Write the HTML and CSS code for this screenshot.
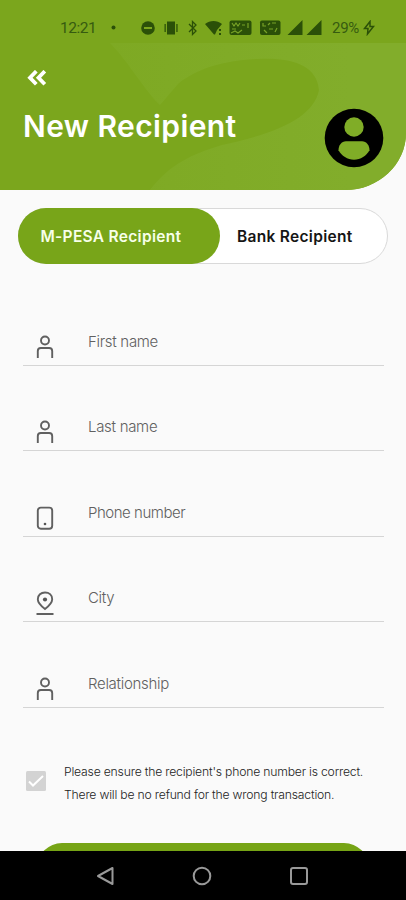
FILE: index.html
```html
<!DOCTYPE html>
<html lang="en">
<head>
<meta charset="utf-8">
<title>New Recipient</title>
<link rel="stylesheet" href="styles.css">
</head>
<body>
<div class="screen">
  <header class="header">
    <svg class="watermark" width="406" height="190" viewBox="0 0 406 190" aria-hidden="true">
      <defs><linearGradient id="leaf" x1="110" x2="350" y1="0" y2="0" gradientUnits="userSpaceOnUse"><stop offset="0" stop-color="#7ea923"/><stop offset="1" stop-color="#82ad2b"/></linearGradient></defs>
      <path fill="url(#leaf)" d="M110 43H406V190H150C170 164 192 154 222 145C278 133 314 117 319 90C317 65 292 57 257 59C213 61 190 74 178 84L160 105C145 91 130 64 110 43Z"/>
    </svg>
    <div class="status">
      <span class="clock">12:21</span>
      <svg class="status-icons" width="220" height="20" viewBox="110 18 220 20" fill="#2b5008">
        <circle cx="113.500" cy="27.500" r="2"/>
        <circle cx="148" cy="28" r="6.800"/><path d="M144 27h8v2h-8z" fill="#7ba61d"/>
        <path d="M167 21.500h8v13h-8zM164.500 24h1.300v8h-1.300zM176.300 24h1.300v8h-1.300z"/>
        <path d="M189 24l7 7-3.500 3.500v-13L196 25l-7 7" fill="none" stroke="#2b5008" stroke-width="1.300"/>
        <path d="M205 24c5-4 12-4 17 0l-5 6-2 4.500h-1zM219 29h2v2h-2zM219 33h2v2h-2z"/>
        <rect x="229.500" y="20.500" width="22" height="14.500" rx="2"/>
        <path d="M232 23l2 3 2-3 2 3 2-3M242 25h3M248 23v5M232 29h4M231 33l4-2 3 2 4-3" fill="none" stroke="#77a126" stroke-width="1.200"/>
        <rect x="260" y="20.500" width="20.500" height="14.500" rx="2"/>
        <path d="M263 23v3h3M268 25l2-2M272 23h4M264 30l3 3M269 29h4M277 28l-2 4" fill="none" stroke="#77a126" stroke-width="1.200"/>
        <path d="M302.500 20v15h-15zM321.500 20v15h-15z"/>
      </svg>
      <span class="battery">29%</span>
      <svg class="bolt" width="12" height="16" viewBox="0 0 12 16"><path d="M7 1.500L1.500 8.500H5L4.500 14L10.500 6.500H7z" fill="none" stroke="#2b5008" stroke-width="1.500"/></svg>
    </div>
    <svg class="back" width="20" height="16" viewBox="0 0 20 16"><path d="M9.300 1.200L3 7.700l6.300 6.500M17.800 1.200l-6.300 6.500 6.300 6.500" fill="none" stroke="#fff" stroke-width="3.800"/></svg>
    <div class="heading">
      <h1>New Recipient</h1>
      <svg class="avatar" width="60" height="60" viewBox="0 0 60 60"><circle cx="30" cy="30" r="29.300"/><circle cx="30" cy="19" r="9.700" fill="#80ad27"/><path fill="#80ad27" d="M22 33.300h16c4.500 0 7.500 4 7.500 9c-3 5.500-9 9.500-15.500 9.500s-12.500-4-15.500-9.500c0-5 3-9 7.500-9z"/></svg>
    </div>
  </header>
  <main>
    <div class="tabs">
      <div class="tab active"><span>M-PESA Recipient</span></div>
      <div class="tab"><span>Bank Recipient</span></div>
    </div>
    <form class="form">
      <div class="field"><svg class="icon" viewBox="0 0 18 25"><circle cx="9" cy="5.500" r="4"/><path d="M1.800 23v-7q0-3 3-3h8.400q3 0 3 3v7"/></svg><span>First name</span></div>
      <div class="field"><svg class="icon" viewBox="0 0 18 25"><circle cx="9" cy="5.500" r="4"/><path d="M1.800 23v-7q0-3 3-3h8.400q3 0 3 3v7"/></svg><span>Last name</span></div>
      <div class="field"><svg class="icon" viewBox="0 0 18 25"><rect x="1.800" y="1.600" width="14.400" height="21.200" rx="3"/><circle class="dot" cx="9" cy="18" r="1.300"/></svg><span class="phone">Phone number</span></div>
      <div class="field"><svg class="icon" viewBox="0 0 18 25"><path d="M9 18C5 15 1.800 12 1.800 8.300C1.800 4 5 1.500 9 1.500s7.200 2.500 7.200 6.800C16.200 12 13 15 9 18zM.5 23h17"/><circle class="dot" cx="9" cy="8.500" r="2.100"/></svg><span>City</span></div>
      <div class="field"><svg class="icon" viewBox="0 0 18 25"><circle cx="9" cy="5.500" r="4"/><path d="M1.800 23v-7q0-3 3-3h8.400q3 0 3 3v7"/></svg><span>Relationship</span></div>
    </form>
    <div class="notice">
      <svg class="check" width="20" height="20" viewBox="0 0 20 20"><rect width="20" height="20" rx="1.500" fill="#d3d3d3"/><path d="M3 10.500l4 4L17 5" fill="none" stroke="#fff" stroke-width="2"/></svg>
      <p>Please ensure the recipient's phone number is correct.<br>There will be no refund for the wrong transaction.</p>
    </div>
    <div class="submit"></div>
  </main>
  <nav class="nav">
    <svg viewBox="0 0 20 20"><path d="M16.500 2v16L2 10z"/></svg>
    <svg viewBox="0 0 20 20"><circle cx="10" cy="10" r="8.300"/></svg>
    <svg viewBox="0 0 20 20"><rect x="2" y="2" width="16" height="16" rx="2"/></svg>
  </nav>
</div>
</body>
</html>
```
FILE: styles.css
```css
* { box-sizing: border-box; }
body { margin: 0; font-family: Inter, sans-serif; background: #fafafa; }
.screen { width: 406px; height: 900px; display: flex; flex-direction: column; overflow: hidden; background: #fafafa; }
.header { height: 189.500px; flex: none; position: relative; overflow: hidden; background: #7ba61d; border-bottom-right-radius: 61px 57px; display: flex; flex-direction: column; }
.watermark { position: absolute; top: 0; left: 0; }
.status { position: relative; height: 38px; padding: 18px 0 0 60px; display: flex; align-items: center; color: #365b10; font: 15.500px/20px Roboto, sans-serif; }
.clock { width: 50px; letter-spacing: -.45px; }
.status-icons { flex: none; }
.battery { margin-left: 2px; width: 31px; font-size: 15px; letter-spacing: -.3px; }
.bolt { flex: none; }
.back { position: relative; margin: 32px 0 0 27px; flex: none; }
.heading { position: relative; display: flex; justify-content: space-between; padding: 22px 22px 0 23px; }
h1 { margin: 0; padding-top: 1px; color: #fff; font-size: 30px; line-height: 34px; font-weight: 600; letter-spacing: .4px; white-space: nowrap; }
.avatar { flex: none; }
main { height: 661.500px; flex: none; overflow: hidden; }
.tabs { margin: 18.500px 18px 0; height: 56px; display: flex; border: 1px solid #d9d9d9; border-radius: 28px; background: #fff; }
.tab { display: flex; align-items: center; height: 56px; margin-top: -1px; padding: 1px 0 0 17px; font-size: 15.500px; font-weight: 600; color: #151515; white-space: nowrap; letter-spacing: .3px; }
.tab.active { width: 202px; margin-left: -1px; padding-left: 22.500px; background: #78a519; color: #f7ffe9; border-radius: 28px; }
.form { padding: 16px 22px 0 23px; }
.field { height: 85.500px; border-bottom: 1px solid #d5d5d5; display: flex; align-items: flex-end; font-size: 15px; font-weight: 300; line-height: 20px; letter-spacing: -.3px; color: #606060; }
.icon { width: 18px; height: 25px; margin: 0 34px 5px 13px; fill: none; stroke: #606060; stroke-width: 1.900; }
.icon .dot { fill: #555; stroke: none; }
.field span { padding-bottom: 13px; }
.field .phone { letter-spacing: -.47px; }
.notice { display: flex; height: 44px; margin: 54px 0 0 26px; align-items: center; }
.check { margin-top: -5px; flex: none; }
.notice p { margin: 0 0 0 18px; font-size: 12.200px; font-weight: 300; line-height: 22.500px; letter-spacing: -.2px; color: #222; white-space: nowrap; }
.submit { margin: 37px 37px 0; height: 50px; border-radius: 25px; background: #76a415; }
.nav { height: 49px; flex: none; background: #000; display: flex; align-items: center; gap: 76.500px; padding-left: 95.500px; }
.nav svg { width: 20px; height: 20px; fill: none; stroke: #999; stroke-width: 2; stroke-linejoin: round; }
```
